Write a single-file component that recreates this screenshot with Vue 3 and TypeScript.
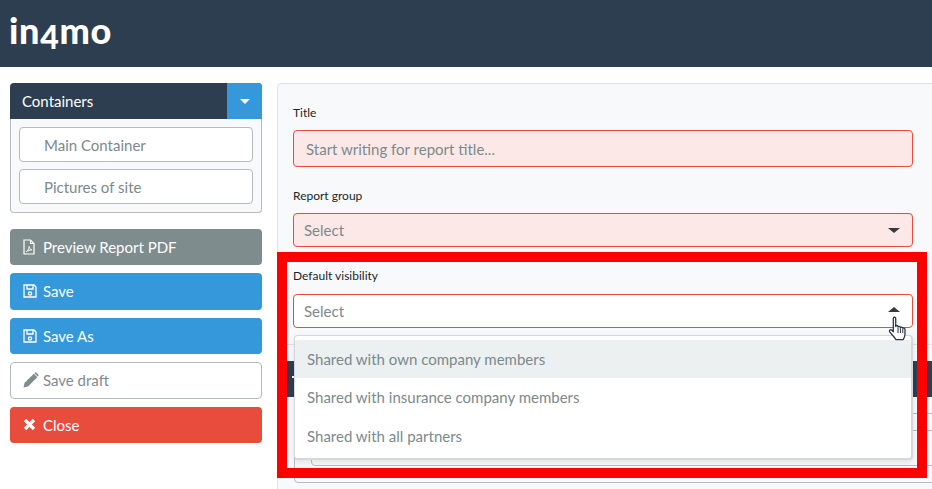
<script setup lang="ts">
const containers: string[] = ['Main Container', 'Pictures of site']
const options: string[] = [
  'Shared with own company members',
  'Shared with insurance company members',
  'Shared with all partners',
]
</script>

<template>
  <div class="page">
    <header class="topbar">
      <div class="logo">in<span class="four">4</span>mo</div>
    </header>
    <main class="content">
      <aside class="sidebar">
        <section class="containers">
          <div class="containers-head">
            <span class="containers-title">Containers</span>
            <span class="containers-toggle"><i class="caret caret-down caret-white"></i></span>
          </div>
          <div class="containers-body">
            <div v-for="c in containers" :key="c" class="container-item">{{ c }}</div>
          </div>
        </section>
        <div class="actions">
          <button class="btn btn-grey">
            <svg class="icon" viewBox="2 0 16 16" fill="none" stroke="currentColor" stroke-width="1.2">
              <path d="M3 1h6.500L13 4.500V15H3z" />
              <path d="M9.500 1v3.500H13" />
              <path d="M5.200 12.800c1.600-.9 3-3.400 2.900-5.300.4 1.900 1.300 3 2.800 3.400-1.900 0-4 .6-5.700 1.900z" stroke-width=".9" />
            </svg>
            Preview Report PDF
          </button>
          <button class="btn btn-blue">
            <svg class="icon" viewBox="1 0 16 16" fill="none" stroke="currentColor" stroke-width="1.300">
              <path d="M2 2h10l2 2v10H2z" />
              <path d="M5 2v4h6V2" />
              <circle cx="8" cy="10.500" r="1.600" />
            </svg>
            Save
          </button>
          <button class="btn btn-blue">
            <svg class="icon" viewBox="1 0 16 16" fill="none" stroke="currentColor" stroke-width="1.300">
              <path d="M2 2h10l2 2v10H2z" />
              <path d="M5 2v4h6V2" />
              <circle cx="8" cy="10.500" r="1.600" />
            </svg>
            Save As
          </button>
          <button class="btn btn-white">
            <svg class="icon" viewBox="0 0 16 16" fill="currentColor">
              <path d="M0.500 15.500l1-4.500L10.800 1.700l3.500 3.500L5 14.500z" />
              <path d="M11.800 0.800c.5-.5 1.200-.5 1.700 0l1.700 1.700c.5.500.5 1.200 0 1.700l-.4.400-3.400-3.400z" />
            </svg>
            Save draft
          </button>
          <button class="btn btn-red">
            <svg class="icon" viewBox="1 0 16 16" fill="none" stroke="currentColor" stroke-width="3.200">
              <path d="M3 3l9 9M12 3l-9 9" />
            </svg>
            Close
          </button>
        </div>
      </aside>

      <section class="panel">
        <div class="fields">
          <label class="label">Title</label>
          <input class="control control-error title-input" placeholder="Start writing for report title..." />
          <label class="label label-group">Report group</label>
          <div class="control control-error select">
            <span>Select</span>
            <i class="caret caret-down"></i>
          </div>
          <label class="label label-visibility">Default visibility</label>
          <div class="select-wrap">
            <div class="control select select-open">
              <span>Select</span>
              <i class="caret caret-up"></i>
            </div>
            <ul class="menu">
              <li v-for="(o, i) in options" :key="o" class="menu-item" :class="{ active: i === 0 }">{{ o }}</li>
            </ul>
            <svg class="pointer" viewBox="0 0 20 26">
              <path
                d="M5.300 2.200c0-1.400 2.400-1.400 2.400 0v8.200c0-1.200 2.300-1.200 2.300 0v.8c0-1.200 2.300-1.200 2.300 0v.9c0-1.200 2.400-1.200 2.400.1 1.400-.6 2.300.2 2.300 1.200v4.800c0 2.500-1 3.800-1.700 5.400H8c-1.600-2.600-4.200-4.800-6.300-7.700-1-1.500.9-2.900 2.200-1.600l1.400 1.500z"
                fill="#fff"
                stroke="#2c3340"
                stroke-width="1.300"
                stroke-linejoin="round"
              />
              <path d="M10 12v5M12.400 12.500v4.500M14.800 13v4" stroke="#2c3340" stroke-width="1" fill="none" />
            </svg>
          </div>
        </div>
        <div class="lower">
          <div class="dark-bar"><span class="bar-mark"></span></div>
          <div class="outer-box">
            <div class="inner-box"></div>
          </div>
        </div>
        <div class="highlight"></div>
      </section>
    </main>
  </div>
</template>

<style>
html,
body {
  margin: 0;
  background: #fff;
}
</style>

<style scoped>
.page {
  width: 932px;
  height: 489px;
  overflow: hidden;
  font-family: Lato, 'Liberation Sans', sans-serif;
  font-size: 15px;
  color: #7b8a8b;
  background: #fff;
}
.topbar {
  height: 67px;
  background: #2c3e50;
  padding-left: 9px;
  box-sizing: border-box;
}
.logo {
  font-size: 36px;
  font-weight: 900;
  line-height: 60px;
  letter-spacing: 0.7px;
  color: #fff;
}
.four {
  font-size: 32px;
  vertical-align: -5px;
  line-height: 0;
}
.content {
  display: flex;
  gap: 15px;
  padding: 16px 0 0 10px;
  width: 960px;
  box-sizing: border-box;
}
.sidebar {
  flex: 0 0 252px;
}
.containers-head {
  display: flex;
  height: 36px;
  border-radius: 4px 4px 0 0;
  overflow: hidden;
  background: #2c3e50;
  color: #fff;
}
.containers-title {
  flex: 1;
  line-height: 36px;
  padding-left: 12px;
}
.containers-toggle {
  flex: 0 0 35px;
  background: #3498db;
  display: flex;
  align-items: center;
  justify-content: center;
}
.containers-body {
  display: flex;
  flex-direction: column;
  gap: 7.800px;
  padding: 8px;
  background: #f8f9fa;
  border: 1px solid #b4bcc2;
  border-top: 0;
  border-radius: 0 0 4px 4px;
}
.container-item {
  box-sizing: border-box;
  height: 34.500px;
  line-height: 34px;
  padding-left: 24px;
  background: #fff;
  border: 1px solid #b4bcc2;
  border-radius: 4px;
}
.actions {
  display: flex;
  flex-direction: column;
  gap: 8px;
  margin-top: 15.900px;
}
.btn {
  display: flex;
  align-items: center;
  gap: 4px;
  height: 36.500px;
  padding: 0 0 0 12px;
  border: 1px solid transparent;
  border-radius: 4px;
  font: inherit;
  text-align: left;
  color: #fff;
}
.btn-grey {
  background: #7f8c8d;
}
.btn-blue {
  background: #3498db;
}
.btn-white {
  background: #fff;
  border-color: #b4bcc2;
  color: #7f8c8d;
}
.btn-red {
  background: #e74c3c;
}
.icon {
  flex: 0 0 16px;
  width: 16px;
  height: 16px;
}
.panel {
  position: relative;
  flex: 1;
  height: 460px;
  padding: 20px 15px 0;
  background: #f8f9fa;
  border: 1px solid #dee2e6;
  border-radius: 4px 0 0 0;
  box-sizing: border-box;
}
.fields {
  width: 620px;
}
.label {
  display: block;
  font-size: 12px;
  line-height: 18px;
  margin-bottom: 8px;
  color: #212529;
}
.label-group {
  margin-top: 20px;
}
.label-visibility {
  margin-top: 20px;
  margin-bottom: 9px;
}
.control {
  display: block;
  width: 100%;
  box-sizing: border-box;
  border: 1px solid #e74c3c;
  border-radius: 4px;
  background: #fff;
  font: inherit;
  color: #7b8a8b;
}
.control-error {
  background: #fce9e7;
}
.title-input {
  height: 37px;
  padding: 0 12px;
  outline: none;
}
.title-input::placeholder {
  color: #7b8a8b;
  opacity: 1;
}
.select {
  display: flex;
  align-items: center;
  justify-content: space-between;
  height: 34px;
  padding: 0 12px 0 10px;
}
.select-wrap {
  position: relative;
}
.caret {
  display: block;
  width: 0;
  height: 0;
  border-left: 6px solid transparent;
  border-right: 6px solid transparent;
}
.caret-down {
  border-top: 5px solid #343a40;
}
.caret-up {
  border-bottom: 5px solid #343a40;
  margin-top: -4px;
}
.caret-white {
  border-left-width: 5px;
  border-right-width: 5px;
  border-top-color: #fff;
}
.menu {
  position: absolute;
  z-index: 2;
  top: 41px;
  left: 1px;
  right: 0;
  margin: 0;
  padding: 4px 0 0;
  height: 125px;
  box-sizing: border-box;
  list-style: none;
  background: #fff;
  border: 1px solid #d5d7da;
  border-bottom-width: 2px;
  border-right-width: 2px;
  border-radius: 4px;
  box-shadow: 0 2px 6px rgba(0, 0, 0, 0.1);
}
.menu-item {
  height: 38.300px;
  line-height: 38.300px;
  padding-left: 12px;
}
.menu-item.active {
  background: #ecf0f1;
}
.pointer {
  position: absolute;
  z-index: 3;
  top: 22px;
  left: 595px;
  width: 20px;
  height: 26px;
}
.lower {
  margin: 16px 0 0 -15px;
  border-top: 1px solid #dee2e6;
}
.dark-bar {
  position: relative;
  margin-top: 16px;
  height: 36px;
  background: #2c3e50;
}
.bar-mark {
  position: absolute;
  left: 14px;
  top: 15px;
  width: 4px;
  height: 2px;
  background: #fff;
}
.outer-box {
  margin: 16px 0 0 16px;
  height: 70px;
  padding: 16px 0 0 16px;
  box-sizing: border-box;
  border: 1px solid #b4bcc2;
  border-radius: 4px;
}
.inner-box {
  height: 36px;
  border: 1px solid #b4bcc2;
  border-radius: 4px;
  box-sizing: border-box;
}
.highlight {
  position: absolute;
  z-index: 4;
  top: 168px;
  left: -1px;
  width: 650px;
  height: 226px;
  border: 10px solid #f00;
  box-sizing: border-box;
  pointer-events: none;
}
</style>
